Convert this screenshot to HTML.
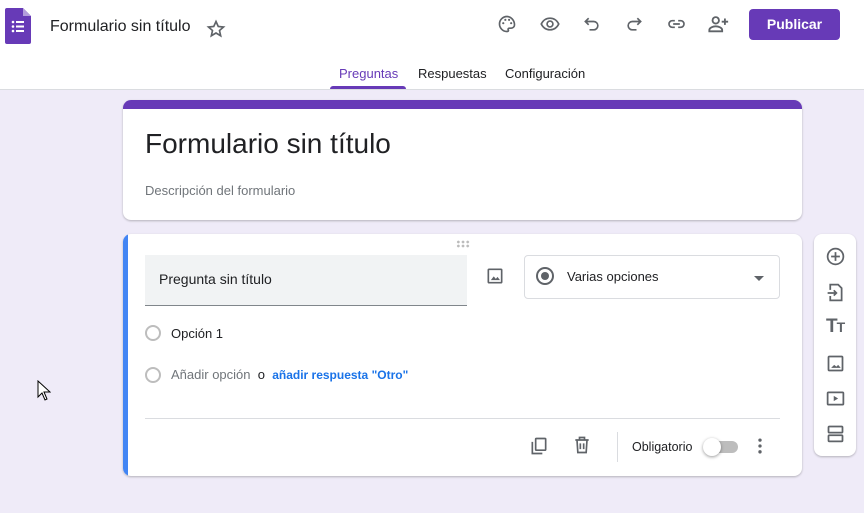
<!DOCTYPE html><html><head><style>
*{box-sizing:border-box;margin:0;padding:0}
body{width:864px;height:513px;background:#efebf8;font-family:"Liberation Sans",Arial,sans-serif;position:relative;overflow:hidden;color:#202124}
.hdr{position:absolute;left:0;top:0;width:864px;height:90px;background:#fff;border-bottom:1px solid #dadce0}
.abs{position:absolute}
svg{position:absolute}
.ic{fill:none;stroke:#5f6368;stroke-width:2}
.card{position:absolute;background:#fff;border-radius:8px;box-shadow:0 1px 2px rgba(0,0,0,.25)}
.radio{position:absolute;width:16px;height:16px;border:2px solid #bdbdbd;border-radius:50%}
</style></head><body>
<div class="hdr"></div>
<svg style="left:5px;top:8px" width="26" height="36" viewBox="0 0 26 36"><path d="M2 0h16l8 8v26a2 2 0 0 1-2 2H2a2 2 0 0 1-2-2V2a2 2 0 0 1 2-2z" fill="#673ab7"/><path d="M18 0v8h8z" fill="#b39ddb"/><g fill="#fff"><circle cx="8" cy="14" r="1.3"/><circle cx="8" cy="18.5" r="1.3"/><circle cx="8" cy="23" r="1.3"/><rect x="11" y="13" width="8" height="2"/><rect x="11" y="17.5" width="8" height="2"/><rect x="11" y="22" width="8" height="2"/></g></svg>
<div class="abs" style="left:50px;top:18px;font-size:16px">Formulario sin título</div>
<svg style="left:206px;top:19px" width="20" height="20" viewBox="0 0 24 24"><path class="ic" stroke-width="1.6" d="M12 3l2.7 6 6.3.6-4.8 4.2 1.4 6.3L12 16.8 6.4 20.1l1.4-6.3L3 9.6l6.3-.6z"/></svg>
<svg style="left:497px;top:14px" width="20" height="20" viewBox="0 0 24 24"><path class="ic" d="M12 3a9 9 0 0 0 0 18c1.5 0 2-1 1.5-2s0-2 1.5-2h2a4 4 0 0 0 4-4c0-5-4-10-9-10z"/><circle cx="7.5" cy="11" r="1.3" fill="#5f6368"/><circle cx="10" cy="7" r="1.3" fill="#5f6368"/><circle cx="14.5" cy="7" r="1.3" fill="#5f6368"/><circle cx="17" cy="11" r="1.3" fill="#5f6368"/></svg>
<svg style="left:539px;top:14px" width="22" height="20" viewBox="0 0 24 24"><path class="ic" d="M1.5 12C4 7 8 5 12 5s8 2 10.5 7C20 17 16 19 12 19s-8-2-10.5-7z"/><circle class="ic" cx="12" cy="12" r="3.5"/></svg>
<svg style="left:582px;top:14px" width="20" height="20" viewBox="0 0 24 24"><path class="ic" d="M8 5L4 9l4 4M4 9h10a5 5 0 0 1 0 10H9"/></svg>
<svg style="left:624px;top:14px" width="20" height="20" viewBox="0 0 24 24"><path class="ic" d="M16 5l4 4-4 4M20 9H10a5 5 0 0 0 0 10h5"/></svg>
<svg style="left:666px;top:14px" width="21" height="20" viewBox="0 0 24 24"><path class="ic" d="M10 8H7a4 4 0 0 0 0 8h3M14 8h3a4 4 0 0 1 0 8h-3M8 12h8"/></svg>
<svg style="left:707px;top:13px" width="23" height="22" viewBox="0 0 24 24"><circle class="ic" cx="9" cy="8" r="3.5"/><path class="ic" d="M2 20v-1.5c0-2.5 4-4 7-4s7 1.5 7 4V20zM19 6v7M15.5 9.5h7"/></svg>
<div class="abs" style="left:749px;top:9px;width:91px;height:31px;background:#673ab7;border-radius:4px;color:#fff;font-weight:bold;font-size:14px;text-align:center;line-height:31px">Publicar</div>
<div class="abs" style="left:339px;top:66px;font-size:13px;color:#673ab7">Preguntas</div>
<div class="abs" style="left:330px;top:86px;width:76px;height:3px;background:#673ab7;border-radius:3px 3px 0 0"></div>
<div class="abs" style="left:418px;top:66px;font-size:13px;color:#202124">Respuestas</div>
<div class="abs" style="left:505px;top:66px;font-size:13px;color:#202124">Configuración</div>

<div class="card" style="left:123px;top:100px;width:679px;height:120px;overflow:hidden"><div style="height:9px;background:#673ab7"></div></div>
<div class="abs" style="left:145px;top:128px;font-size:28px">Formulario sin título</div>
<div class="abs" style="left:145px;top:183px;font-size:13px;color:#70757a">Descripción del formulario</div>

<div class="card" style="left:123px;top:234px;width:679px;height:242px;overflow:hidden"><div style="width:5px;height:100%;background:#4285f4"></div></div>
<div class="abs" style="left:456px;top:240px;width:14px;height:8px;background:radial-gradient(circle,#bbb 1.2px,transparent 1.5px) 0 0/4.7px 4px"></div>
<div class="abs" style="left:145px;top:255px;width:322px;height:51px;background:#f1f3f4;border-bottom:1px solid #80868b"></div>
<div class="abs" style="left:159px;top:271px;font-size:14px">Pregunta sin título</div>
<svg style="left:485px;top:266px" width="20" height="20" viewBox="0 0 24 24"><rect class="ic" x="4" y="4" width="16" height="16" rx="1"/><path d="M7 17l3.5-4.5 2.5 3 2-2.5 3 4z" fill="#5f6368"/></svg>
<div class="abs" style="left:524px;top:255px;width:256px;height:44px;border:1px solid #dadce0;border-radius:4px"></div>
<div class="abs" style="left:536px;top:267px;width:18px;height:18px;border:2px solid #5f6368;border-radius:50%"><div style="margin:3px;width:8px;height:8px;border-radius:50%;background:#5f6368"></div></div>
<div class="abs" style="left:567px;top:269px;font-size:13px">Varias opciones</div>
<div class="abs" style="left:754px;top:276px;border:5px solid transparent;border-top-color:#5f6368;border-bottom:0"></div>
<div class="radio" style="left:145px;top:325px"></div>
<div class="abs" style="left:171px;top:326px;font-size:13px">Opción 1</div>
<div class="radio" style="left:145px;top:367px"></div>
<div class="abs" style="left:171px;top:367px;font-size:13px;color:#70757a">Añadir opción<span style="color:#202124">&nbsp; o&nbsp; </span><b style="color:#1a73e8;font-weight:bold;font-size:12px">añadir respuesta "Otro"</b></div>
<div class="abs" style="left:145px;top:418px;width:635px;height:1px;background:#dadce0"></div>
<svg style="left:529px;top:435px" width="20" height="22" viewBox="0 0 24 24"><path class="ic" d="M4 7v14h12"/><rect class="ic" x="8" y="3" width="12" height="14" rx="1"/></svg>
<svg style="left:572px;top:435px" width="20" height="20" viewBox="0 0 24 24"><path class="ic" d="M4 6h16M9 6V3h6v3M6 6l1 15h10l1-15M10 10v7M14 10v7"/></svg>
<div class="abs" style="left:617px;top:432px;width:1px;height:30px;background:#dadce0"></div>
<div class="abs" style="left:632px;top:440px;font-size:12.5px">Obligatorio</div>
<div class="abs" style="left:706px;top:441px;width:32px;height:12px;background:#bdbdbd;border-radius:6px"></div>
<div class="abs" style="left:703px;top:438px;width:18px;height:18px;background:#fff;border-radius:50%;box-shadow:0 1px 3px rgba(0,0,0,.4)"></div>
<svg style="left:750px;top:436px" width="20" height="20" viewBox="0 0 24 24"><circle cx="12" cy="5" r="2" fill="#5f6368"/><circle cx="12" cy="12" r="2" fill="#5f6368"/><circle cx="12" cy="19" r="2" fill="#5f6368"/></svg>

<div class="card" style="left:814px;top:234px;width:42px;height:222px"></div>
<svg style="left:825px;top:246px" width="21" height="21" viewBox="0 0 24 24"><circle class="ic" cx="12" cy="12" r="9"/><path class="ic" d="M12 7v10M7 12h10"/></svg>
<svg style="left:825px;top:282px" width="21" height="21" viewBox="0 0 24 24"><path class="ic" d="M6 9V3h9l4 4v14H6v-5M3 12.5h10M10 9.5l3 3-3 3"/></svg>
<div class="abs" style="left:826px;top:316px;font-size:19px;font-weight:bold;color:#5f6368;letter-spacing:-1px">T<span style="font-size:14px">T</span></div>
<svg style="left:825px;top:353px" width="21" height="21" viewBox="0 0 24 24"><rect class="ic" x="4" y="4" width="16" height="16" rx="1"/><path d="M7 17l3.5-3.5 2.5 2 2-2 3 3.5z" fill="#5f6368"/></svg>
<svg style="left:825px;top:388px" width="21" height="21" viewBox="0 0 24 24"><rect class="ic" x="3" y="5" width="18" height="14" rx="1"/><path d="M10 9v6l5-3z" fill="#5f6368"/></svg>
<svg style="left:825px;top:423px" width="21" height="21" viewBox="0 0 24 24"><rect class="ic" x="4" y="4" width="16" height="7" rx="1"/><rect class="ic" x="4" y="14" width="16" height="7" rx="1"/></svg>
<svg style="left:37px;top:380px" width="14" height="22" viewBox="0 0 14 22"><path d="M1 1v16l4-4 3 7 2-1-3-7h6z" fill="#fff" stroke="#000" stroke-width="1"/></svg>
</body></html>
